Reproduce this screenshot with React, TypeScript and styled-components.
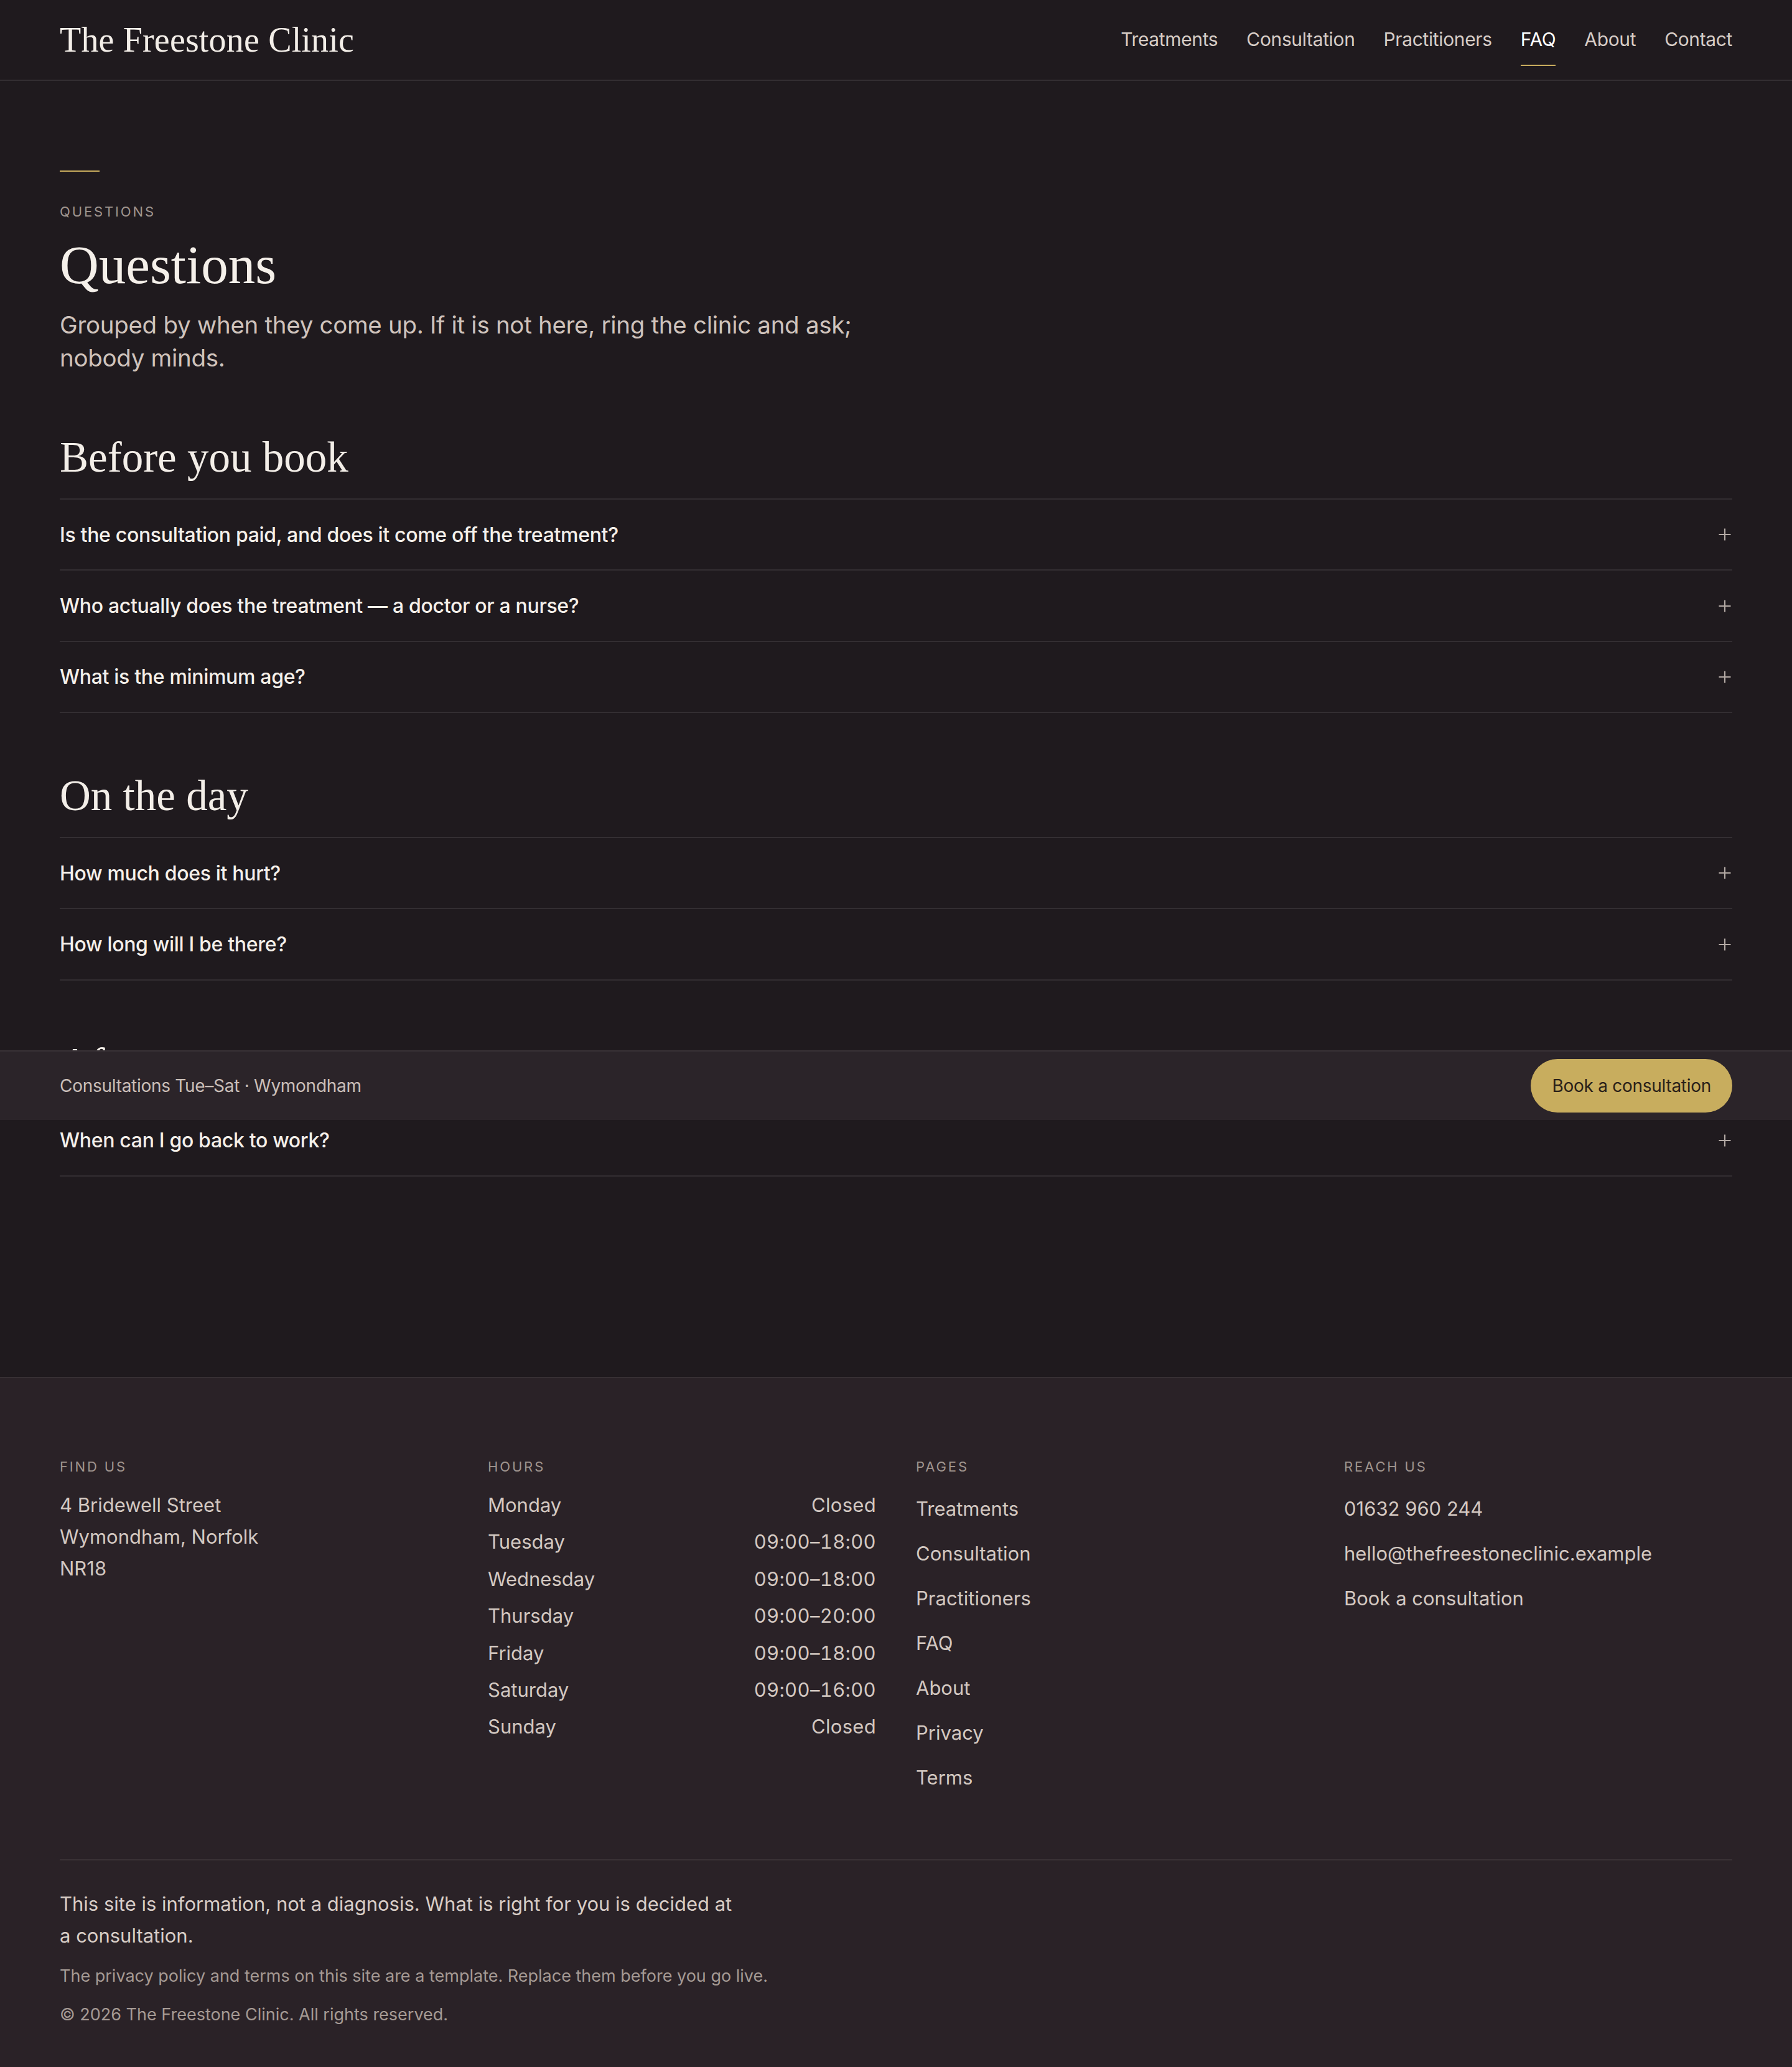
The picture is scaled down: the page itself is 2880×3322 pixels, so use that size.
import React from "react"
import styled, { createGlobalStyle } from "styled-components"

const GlobalStyle = createGlobalStyle`
  html, body {
    margin: 0;
    padding: 0;
    background: #2a2227;
  }
  body {
    font-family: "Inter", "Noto Sans", sans-serif;
    color: #d3c8c1;
    -webkit-font-smoothing: antialiased;
  }
  * {
    box-sizing: border-box;
  }
`

const navItems = ["Treatments", "Consultation", "Practitioners", "FAQ", "About", "Contact"]

const sections = [
  {
    title: "Before you book",
    questions: [
      "Is the consultation paid, and does it come off the treatment?",
      "Who actually does the treatment — a doctor or a nurse?",
      "What is the minimum age?",
    ],
  },
  {
    title: "On the day",
    questions: ["How much does it hurt?", "How long will I be there?"],
  },
  {
    title: "Aftercare",
    questions: ["When can I go back to work?"],
  },
]

const hours = [
  ["Monday", "Closed"],
  ["Tuesday", "09:00–18:00"],
  ["Wednesday", "09:00–18:00"],
  ["Thursday", "09:00–20:00"],
  ["Friday", "09:00–18:00"],
  ["Saturday", "09:00–16:00"],
  ["Sunday", "Closed"],
]

const pages = ["Treatments", "Consultation", "Practitioners", "FAQ", "About", "Privacy", "Terms"]

const PlusIcon = () => (
  <svg width="20" height="20" viewBox="0 0 20 20" fill="none">
    <path d="M10 0.5v19M0.5 10h19" stroke="#b3a9a4" strokeWidth="2.2" />
  </svg>
)

const App: React.FC = () => {
  return (
    <Page>
      <GlobalStyle />
      <Header>
        <Logo>The Freestone Clinic</Logo>
        <Nav>
          {navItems.map((item) => (
            <NavLink key={item} $active={item === "FAQ"}>
              {item}
            </NavLink>
          ))}
        </Nav>
      </Header>

      <Main>
        <GoldRule />
        <Eyebrow>Questions</Eyebrow>
        <Title>Questions</Title>
        <Lead>
          Grouped by when they come up. If it is not here, ring the clinic and ask; nobody minds.
        </Lead>

        {sections.map((section) => (
          <Section key={section.title}>
            <SectionTitle>{section.title}</SectionTitle>
            <QuestionList>
              {section.questions.map((q) => (
                <QuestionRow key={q}>
                  <QuestionText>{q}</QuestionText>
                  <PlusIcon />
                </QuestionRow>
              ))}
            </QuestionList>
          </Section>
        ))}
      </Main>

      <StickyBar>
        <StickyText>Consultations Tue–Sat · Wymondham</StickyText>
        <BookButton>Book a consultation</BookButton>
      </StickyBar>

      <Footer>
        <FooterGrid>
          <FooterColumn>
            <FooterHeading>Find us</FooterHeading>
            <Address>
              4 Bridewell Street
              <br />
              Wymondham, Norfolk
              <br />
              NR18
            </Address>
          </FooterColumn>
          <FooterColumn>
            <FooterHeading>Hours</FooterHeading>
            <HoursList>
              {hours.map(([day, time]) => (
                <HoursRow key={day}>
                  <span>{day}</span>
                  <HoursTime>{time}</HoursTime>
                </HoursRow>
              ))}
            </HoursList>
          </FooterColumn>
          <FooterColumn>
            <FooterHeading>Pages</FooterHeading>
            <LinkList>
              {pages.map((p) => (
                <FooterLink key={p}>{p}</FooterLink>
              ))}
            </LinkList>
          </FooterColumn>
          <FooterColumn>
            <FooterHeading>Reach us</FooterHeading>
            <LinkList>
              <FooterLink>01632 960 244</FooterLink>
              <FooterLink>hello@thefreestoneclinic.example</FooterLink>
              <FooterLink>Book a consultation</FooterLink>
            </LinkList>
          </FooterColumn>
        </FooterGrid>

        <FooterBottom>
          <Disclaimer>
            This site is information, not a diagnosis. What is right for you is decided at a
            consultation.
          </Disclaimer>
          <SmallPrint>
            The privacy policy and terms on this site are a template. Replace them before you go
            live.
          </SmallPrint>
          <Copyright>© 2026 The Freestone Clinic. All rights reserved.</Copyright>
        </FooterBottom>
      </Footer>
    </Page>
  )
}

export default App

const Page = styled.div`
  position: relative;
  background: #1f1a1e;
`

const Header = styled.header`
  height: 130px;
  padding: 0 96px;
  display: flex;
  align-items: center;
  justify-content: space-between;
  border-bottom: 2px solid #332e32;
`

const Logo = styled.div`
  font-family: "Liberation Serif", "Times New Roman", serif;
  font-size: 56px;
  color: #f3eee8;
  letter-spacing: 0.003em;
`

const Nav = styled.nav`
  display: flex;
  gap: 46px;
  height: 100%;
`

const NavLink = styled.a<{ $active?: boolean }>`
  position: relative;
  display: flex;
  align-items: center;
  height: 100%;
  padding-bottom: 2px;
  font-size: 30px;
  letter-spacing: -0.012em;
  color: ${(p) => (p.$active ? "#ffffff" : "#d6ccc6")};
  cursor: pointer;
  &::after {
    content: "";
    display: ${(p) => (p.$active ? "block" : "none")};
    position: absolute;
    left: 0;
    right: 0;
    bottom: 22px;
    height: 2px;
    background: #c9ad5e;
  }
`

const Main = styled.main`
  padding: 144px 96px 322px;
`

const GoldRule = styled.div`
  width: 64px;
  height: 2px;
  background: #c9ad5e;
  margin-bottom: 48px;
`

const Eyebrow = styled.div`
  font-size: 22px;
  line-height: 32px;
  letter-spacing: 0.13em;
  text-transform: uppercase;
  color: #a0958f;
  margin-bottom: 20px;
`

const Title = styled.h1`
  margin: 0;
  font-family: "Liberation Serif", "Times New Roman", serif;
  font-weight: 400;
  font-size: 87px;
  line-height: 1.15;
  color: #f5f0ea;
`

const Lead = styled.p`
  margin: 20px 0 0;
  max-width: 1360px;
  font-size: 38.5px;
  line-height: 1.38;
  letter-spacing: -0.008em;
  color: #cfc3bc;
`

const Section = styled.section`
  margin-top: 92px;
`

const SectionTitle = styled.h2`
  margin: 0 0 24px;
  font-family: "Liberation Serif", "Times New Roman", serif;
  font-weight: 400;
  font-size: 69px;
  line-height: 1.2;
  color: #f3eee8;
`

const QuestionList = styled.div`
  border-top: 2px solid #332e32;
`

const QuestionRow = styled.div`
  display: flex;
  align-items: center;
  justify-content: space-between;
  padding: 34.6px 0;
  border-bottom: 2px solid #332e32;
  cursor: pointer;
  svg {
    margin-right: 2px;
  }
`

const QuestionText = styled.span`
  font-size: 32px;
  line-height: 1.35;
  font-weight: 500;
  letter-spacing: -0.01em;
  color: #f5f0ea;
`

const StickyBar = styled.div`
  position: absolute;
  top: 1688px;
  left: 0;
  right: 0;
  height: 112px;
  padding: 0 96px;
  display: flex;
  align-items: center;
  justify-content: space-between;
  background: #2b2429;
  border-top: 2px solid #393236;
`

const StickyText = styled.span`
  font-size: 28px;
  letter-spacing: -0.01em;
  color: #c9beb8;
`

const BookButton = styled.a`
  display: inline-flex;
  align-items: center;
  height: 86px;
  padding: 0 34px;
  border-radius: 999px;
  background: #c8ad5e;
  color: #2a2119;
  font-size: 28px;
  letter-spacing: -0.01em;
  cursor: pointer;
`

const Footer = styled.footer`
  background: #2a2227;
  border-top: 2px solid #373034;
  padding: 126px 96px 72px;
`

const FooterGrid = styled.div`
  display: grid;
  grid-template-columns: repeat(4, 1fr);
  gap: 64px;
`

const FooterColumn = styled.div`
  display: flex;
  flex-direction: column;
`

const FooterHeading = styled.div`
  font-size: 22px;
  line-height: 32px;
  letter-spacing: 0.13em;
  text-transform: uppercase;
  color: #a0958f;
  margin-bottom: 20px;
`

const Address = styled.div`
  font-size: 31px;
  line-height: 51px;
  color: #d3c8c1;
`

const HoursList = styled.div`
  display: flex;
  flex-direction: column;
  gap: 8.4px;
`

const HoursRow = styled.div`
  display: flex;
  justify-content: space-between;
  font-size: 31px;
  line-height: 51px;
  color: #d3c8c1;
`

const HoursTime = styled.span`
  font-variant-numeric: tabular-nums;
  letter-spacing: 0.01em;
`

const LinkList = styled.div`
  display: flex;
  flex-direction: column;
  gap: 21px;
  padding-top: 6px;
`

const FooterLink = styled.a`
  font-size: 31px;
  line-height: 51px;
  color: #d3c8c1;
  cursor: pointer;
`

const FooterBottom = styled.div`
  margin-top: 106px;
  padding-top: 44px;
  border-top: 2px solid #3a3236;
`

const Disclaimer = styled.p`
  margin: 0;
  max-width: 1090px;
  font-size: 31px;
  line-height: 51px;
  color: #d8cdc6;
`

const SmallPrint = styled.p`
  margin: 20px 0 0;
  font-size: 27px;
  line-height: 40px;
  color: #a59a94;
`

const Copyright = styled.p`
  margin: 22px 0 0;
  font-size: 27px;
  line-height: 40px;
  color: #a59a94;
`
